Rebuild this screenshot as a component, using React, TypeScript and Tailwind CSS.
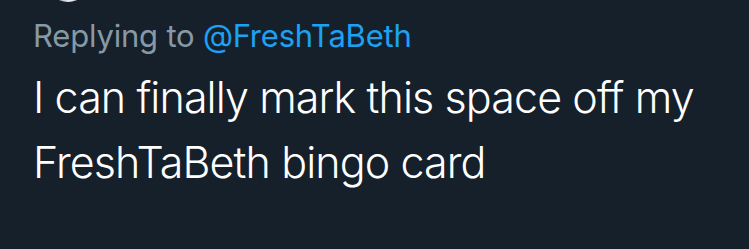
const App = () => {
  return (
    <div className="relative w-[749px] h-[249px] overflow-hidden bg-[#15202b] font-['Inter','Noto_Sans',sans-serif]">
      {/* bottom edge of the avatar above */}
      <div className="absolute left-[46px] top-[-48px] w-[44px] h-[50px] rounded-full bg-[radial-gradient(circle_at_55%_95%,#f3f4f6_0%,#9ca3af_25%,#15202b_50%)]" />
      <div className="pt-[17px] pl-[33px]">
        <div className="text-[31px] leading-[38px] tracking-[-0.2px] text-[#8899a6]">
          Replying to <span className="text-[#1da1f2]">@FreshTaBeth</span>
        </div>
        <div className="mt-[10px] text-[43px] leading-[65px] font-light tracking-[-0.9px] text-white">
          I can finally mark this space off my
          <br />
          FreshTaBeth bingo card
        </div>
      </div>
    </div>
  );
};

export default App;
